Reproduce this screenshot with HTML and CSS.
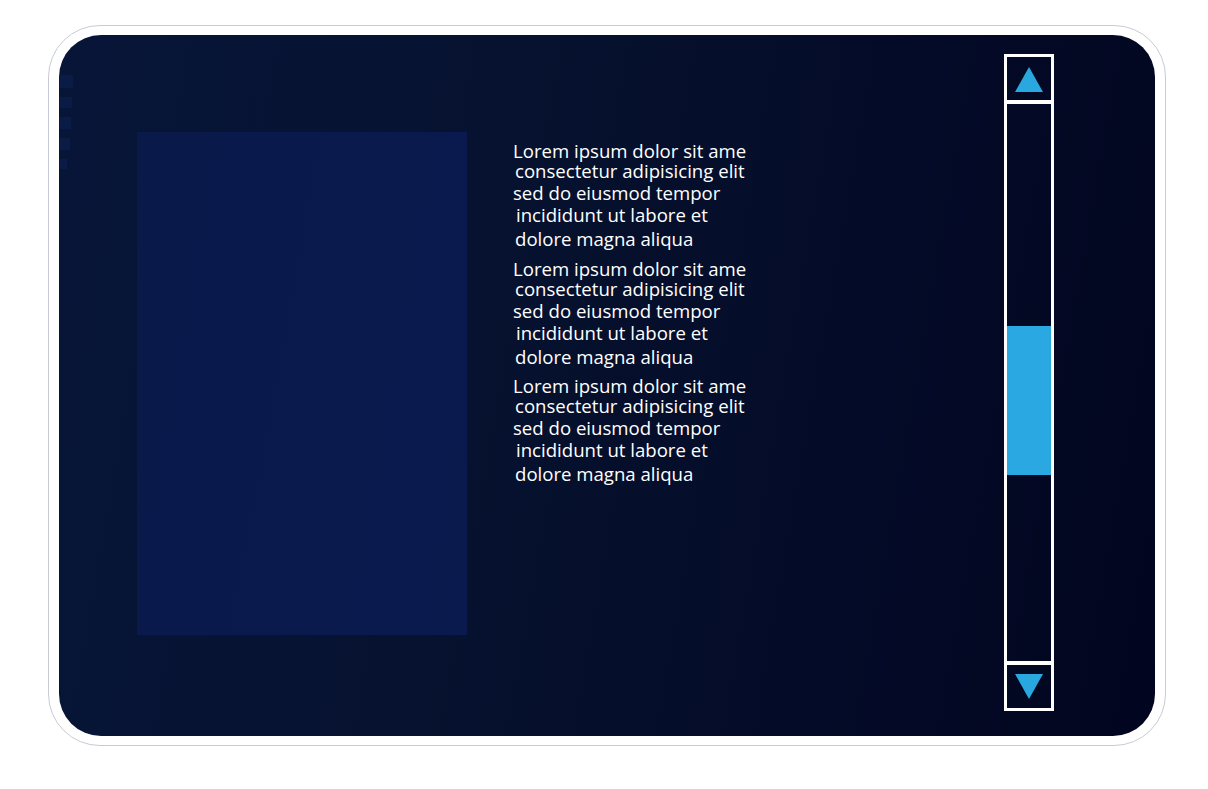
FILE: index.html
```html
<!DOCTYPE html>
<html lang="en">
<head>
    <meta charset="UTF-8">
    <title>Scroll Panel</title>
    <link rel="stylesheet" href="styles.css">
</head>
<body>
    <div class="frame">
        <div class="panel">
            <div class="edge-marks">
                <span class="mark m1"></span>
                <span class="mark m2"></span>
                <span class="mark m3"></span>
                <span class="mark m4"></span>
                <span class="mark m5"></span>
            </div>

            <div class="picture"></div>

            <div class="text-list">
                <div class="entry">
                    <div class="line l1">Lorem ipsum dolor sit ame</div>
                    <div class="line l2">consectetur adipisicing elit</div>
                    <div class="line l3">sed do eiusmod tempor</div>
                    <div class="line l4">incididunt ut labore et</div>
                    <div class="line l5">dolore magna aliqua</div>
                </div>
                <div class="entry">
                    <div class="line l1">Lorem ipsum dolor sit ame</div>
                    <div class="line l2">consectetur adipisicing elit</div>
                    <div class="line l3">sed do eiusmod tempor</div>
                    <div class="line l4">incididunt ut labore et</div>
                    <div class="line l5">dolore magna aliqua</div>
                </div>
                <div class="entry">
                    <div class="line l1">Lorem ipsum dolor sit ame</div>
                    <div class="line l2">consectetur adipisicing elit</div>
                    <div class="line l3">sed do eiusmod tempor</div>
                    <div class="line l4">incididunt ut labore et</div>
                    <div class="line l5">dolore magna aliqua</div>
                </div>
            </div>

            <div class="scrollbar">
                <div class="arrow-btn up">
                    <svg width="30" height="26" viewBox="0 0 30 26"><polygon points="15,1 29,26 1,26" fill="#29a8e0"/></svg>
                </div>
                <div class="track">
                    <div class="thumb"></div>
                </div>
                <div class="arrow-btn down">
                    <svg width="30" height="26" viewBox="0 0 30 26"><polygon points="1,0 29,0 15,25" fill="#29a8e0"/></svg>
                </div>
            </div>
        </div>
    </div>
</body>
</html>
```

FILE: styles.css
```css
* { box-sizing: border-box; }
body {
    margin: 0;
    background: #fff;
    font-family: 'Open Sans', 'Noto Sans', Arial, sans-serif;
}
.frame {
    margin: 25px 0 0 48px;
    width: 1118px;
    height: 721px;
    padding: 9px 10px;
    border: 1px solid #c8cbd4;
    border-radius: 52px;
    background: #fff;
}
.panel {
    position: relative;
    height: 701px;
    display: flex;
    align-items: flex-start;
    padding: 0 101px 0 78px;
    border-radius: 42px;
    overflow: hidden;
    background: linear-gradient(100deg, #071538 0%, #06122f 40%, #040b28 70%, #02051f 100%);
}
.edge-marks {
    position: absolute;
    left: 0;
    top: 40px;
    display: flex;
    flex-direction: column;
    gap: 9px;
}
.mark {
    display: block;
    width: 14px;
    height: 13px;
    background: rgba(25, 55, 125, 0.2);
}
.m2 { width: 13px; height: 11px; }
.m3 { width: 12px; height: 12px; }
.m4 { width: 11px; height: 12px; }
.m5 { width: 8px; height: 10px; }
.picture {
    flex: none;
    width: 330px;
    height: 503px;
    margin-top: 97px;
    background: linear-gradient(100deg, #09194a 0%, #0a1a4e 100%);
}
.text-list {
    margin: 106px 0 0 46px;
    color: #fff;
    font-size: 18.6px;
}
.entry { margin-bottom: 5.5px; }
.line { white-space: nowrap; }
.l1 { line-height: 20px; }
.l2 { line-height: 20px; padding-left: 2px; }
.l3 { line-height: 24px; }
.l4 { line-height: 20px; padding-left: 3px; }
.l5 { line-height: 28px; padding-left: 2px; }
.scrollbar {
    flex: none;
    margin: 19px 0 0 auto;
    width: 50px;
    height: 657px;
    border: 3px solid #fff;
    display: flex;
    flex-direction: column;
}
.arrow-btn {
    height: 47px;
    display: flex;
    justify-content: center;
    align-items: center;
}
.arrow-btn.up { border-bottom: 4px solid #fff; }
.arrow-btn.down { border-top: 4px solid #fff; }
.track {
    flex: 1;
    padding-top: 222px;
}
.thumb {
    height: 149px;
    background: #29a8e2;
}
```
